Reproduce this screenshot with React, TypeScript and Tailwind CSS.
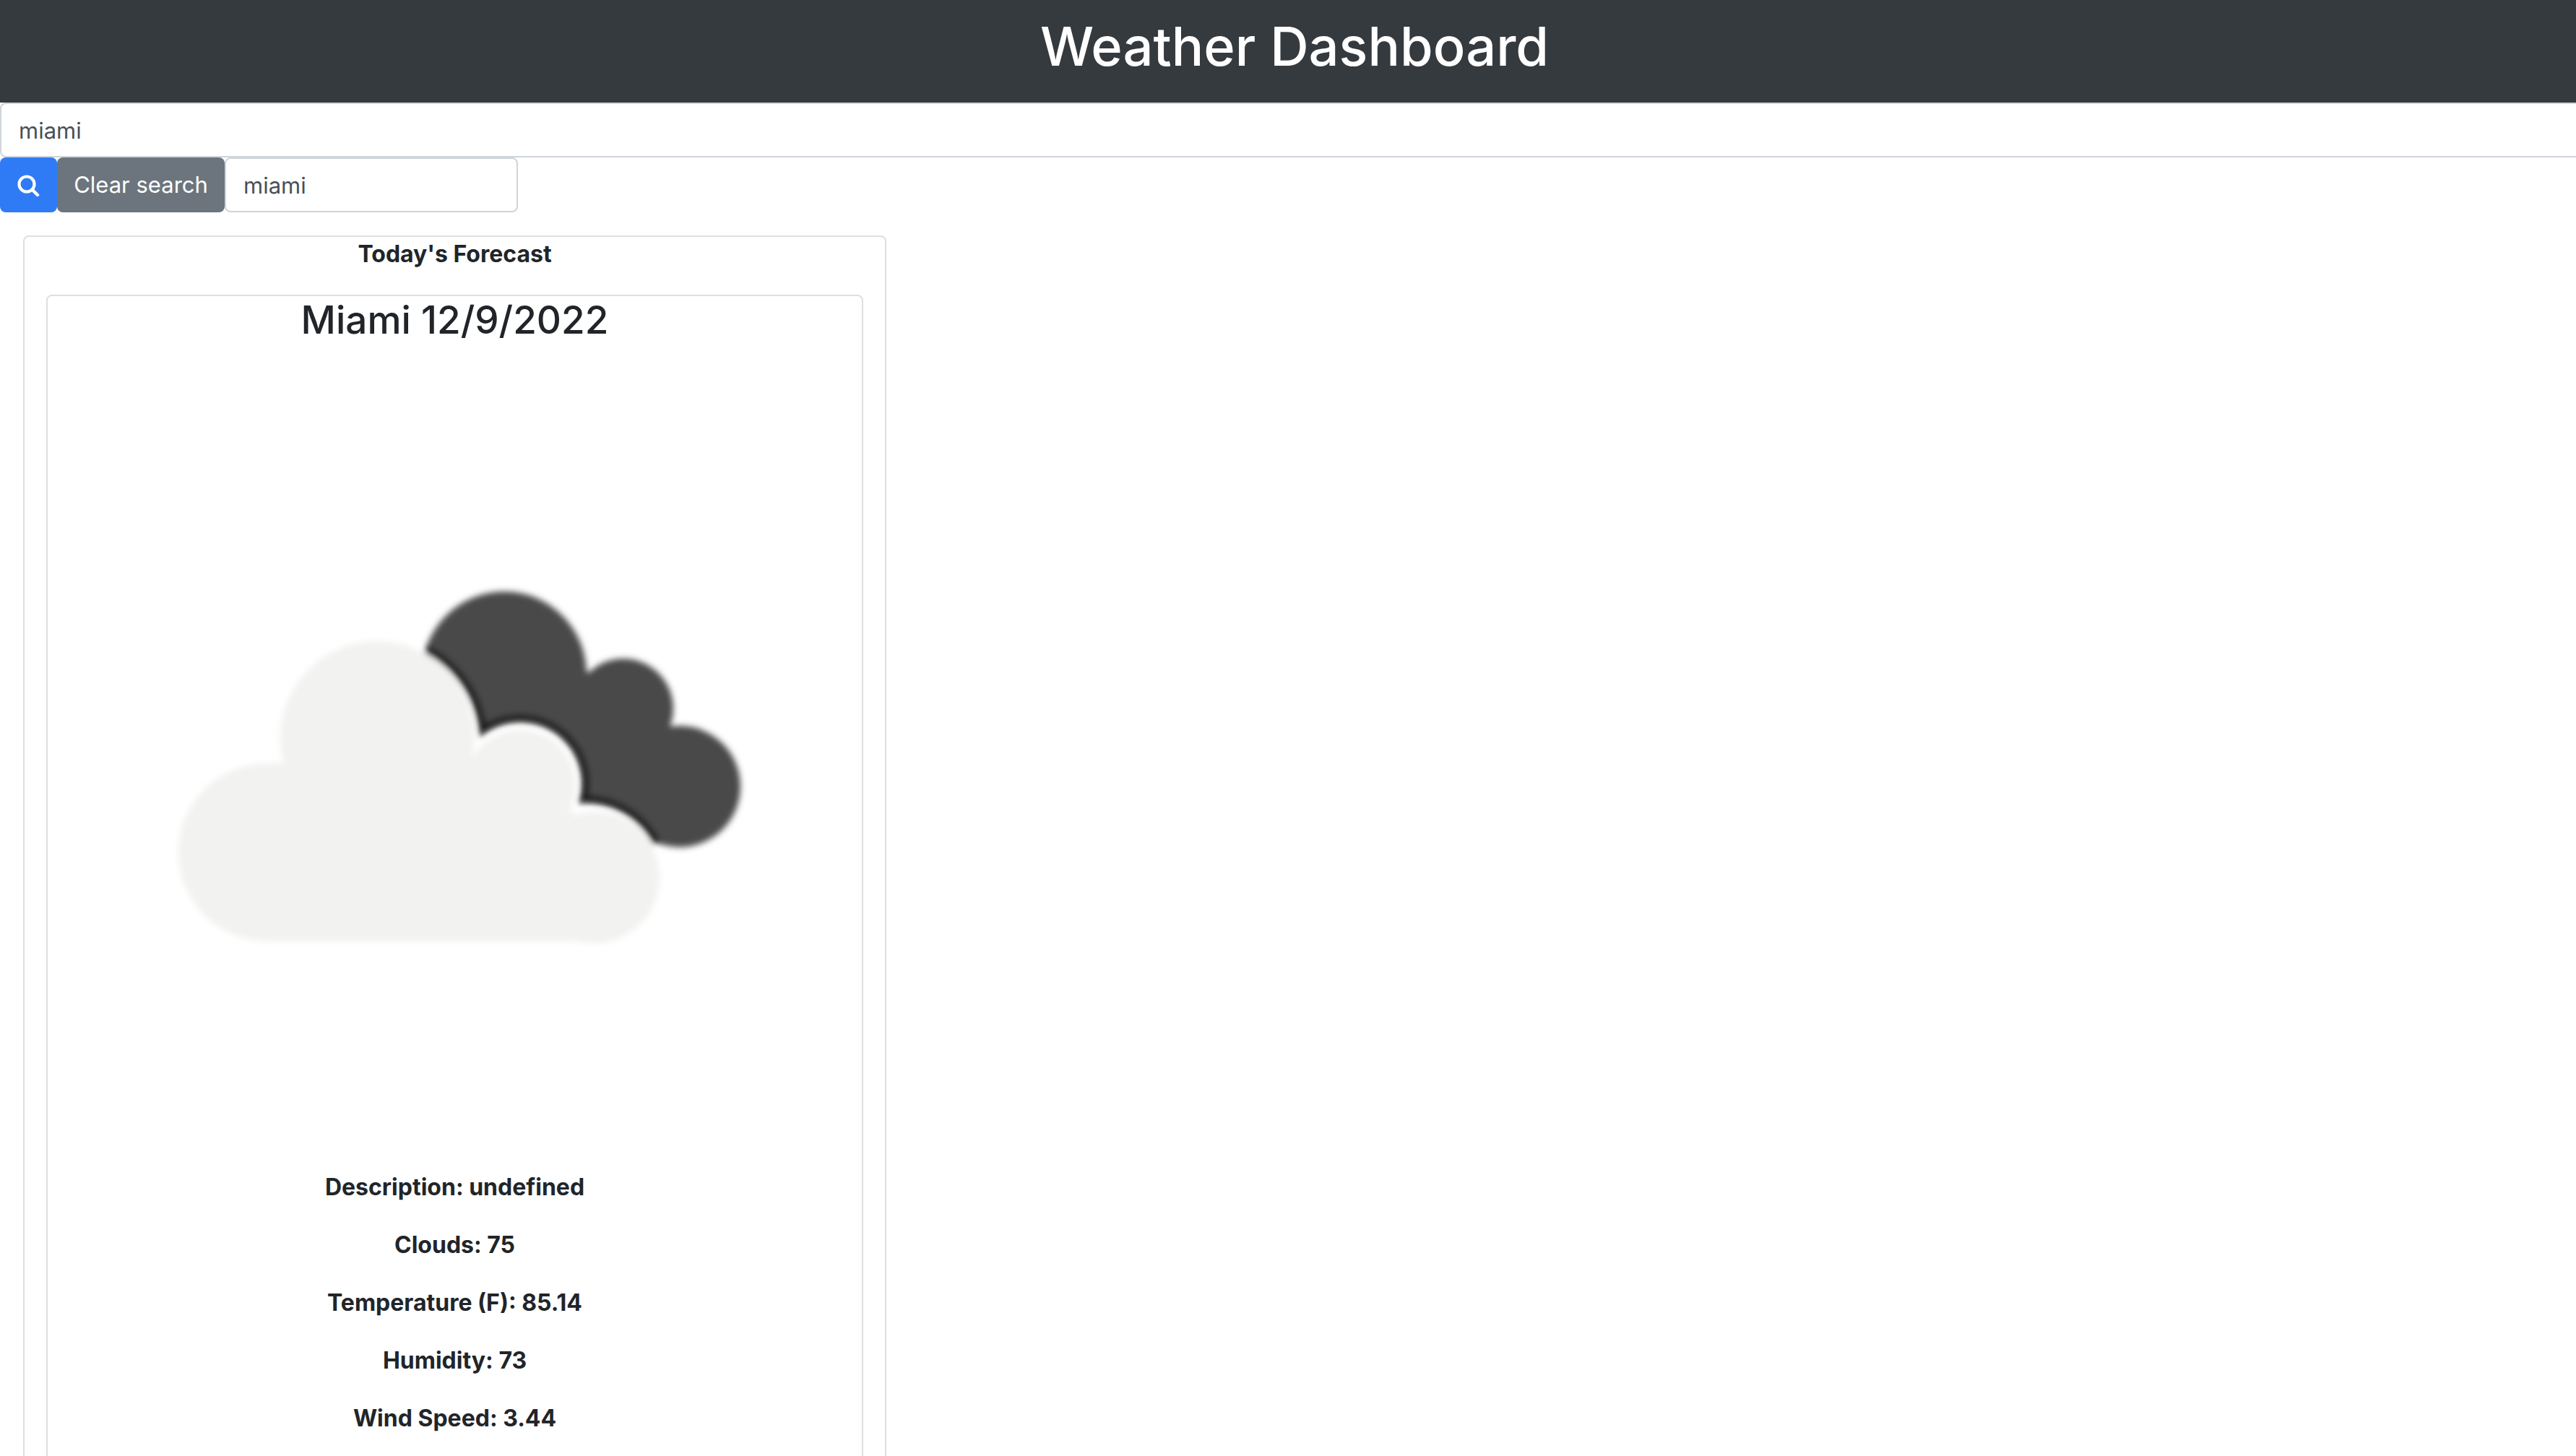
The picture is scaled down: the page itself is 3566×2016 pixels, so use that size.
import { useState } from "react";

const stats: [string, string][] = [
  ["Description", "undefined"],
  ["Clouds", "75"],
  ["Temperature (F)", "85.14"],
  ["Humidity", "73"],
  ["Wind Speed", "3.44"],
];

function BrokenClouds() {
  return (
    <svg viewBox="0 0 1127 1127" className="block w-full" role="img" aria-label="Broken clouds">
      <defs>
        <mask id="cut" maskUnits="userSpaceOnUse" x="0" y="0" width="1127" height="1127">
          <rect width="1127" height="1127" fill="white" />
          <g fill="black">
            <circle cx="459" cy="535" r="139" />
            <circle cx="654" cy="592" r="85" />
            <circle cx="744" cy="725" r="106" />
          </g>
        </mask>
        <clipPath id="back">
          <circle cx="632" cy="440" r="114" />
          <circle cx="797" cy="488" r="69" />
          <circle cx="875" cy="596" r="84" />
          <path d="M530 440L745 436L864 518L840 678L700 650Z" />
        </clipPath>
        <filter id="soft">
          <feGaussianBlur stdDeviation="4" />
        </filter>
      </defs>
      <g filter="url(#soft)">
        <g mask="url(#cut)">
          <g clipPath="url(#back)">
            <rect width="1127" height="1127" fill="#48484a" />
            <g fill="none" stroke="#1c1c1e" strokeWidth="16">
              <circle cx="459" cy="535" r="142" />
              <circle cx="654" cy="592" r="88" />
              <circle cx="744" cy="725" r="109" />
            </g>
          </g>
        </g>
        <g fill="#f2f2f0">
          <circle cx="456" cy="529" r="134" />
          <circle cx="304" cy="687" r="123" />
          <circle cx="654" cy="594" r="76" />
          <circle cx="756" cy="722" r="91" />
          <path d="M304 564H330L500 500L592 558L715 600L728 640L756 700V810H304Z" />
        </g>
      </g>
    </svg>
  );
}

export default function App() {
  const [city, setCity] = useState("miami");
  return (
    <div className="h-screen overflow-hidden bg-white font-[Inter,sans-serif] text-[32px] leading-[48px] text-[#212529]">
      <div className="w-[calc(100%+18px)]">
        <header className="bg-[#353a3e] pt-4 pb-[30px] text-center text-white">
          <h1 className="text-[74px] leading-[96px] font-medium">Weather Dashboard</h1>
        </header>
        <main>
          <form className="text-[31px]" onSubmit={(e) => e.preventDefault()}>
            <input
              aria-label="City"
              value={city}
              onChange={(e) => setCity(e.target.value)}
              className="block h-[76px] w-full rounded-lg border-2 border-[#ced4da] bg-white px-6 text-[#495057]"
            />
            <div className="flex">
              <button type="submit" aria-label="Search" className="flex h-[76px] w-[79px] items-center justify-center rounded-lg bg-[#2f7bf6]">
                <svg viewBox="0 0 32 32" className="size-8" fill="none" stroke="white" strokeLinecap="round">
                  <circle cx="13" cy="15" r="10.5" strokeWidth="4.2" />
                  <path d="M21 23L28 30" strokeWidth="4.4" />
                </svg>
              </button>
              <button type="button" onClick={() => setCity("")} className="h-[76px] w-[232px] rounded-lg bg-[#6c757d] text-center whitespace-nowrap text-white">
                Clear search
              </button>
              <input
                aria-label="Previous search"
                readOnly
                value="miami"
                className="h-[76px] w-[406px] rounded-lg border-2 border-[#ced4da] bg-white px-6 text-[#495057]"
              />
            </div>
          </form>
          <section className="m-8 w-[1195px] rounded-lg border-2 border-[#dfdfdf] px-[30px] text-center">
            <h2 className="font-bold">Today's Forecast</h2>
            <article className="mt-8 rounded-lg border-2 border-[#dfdfdf]">
              <h3 className="mb-4 text-[53px] leading-[67px] font-medium">Miami 12/9/2022</h3>
              <BrokenClouds />
              {stats.map(([label, value]) => (
                <p key={label} className="mb-8 font-bold">
                  {label}: {value}
                </p>
              ))}
            </article>
          </section>
        </main>
      </div>
    </div>
  );
}
